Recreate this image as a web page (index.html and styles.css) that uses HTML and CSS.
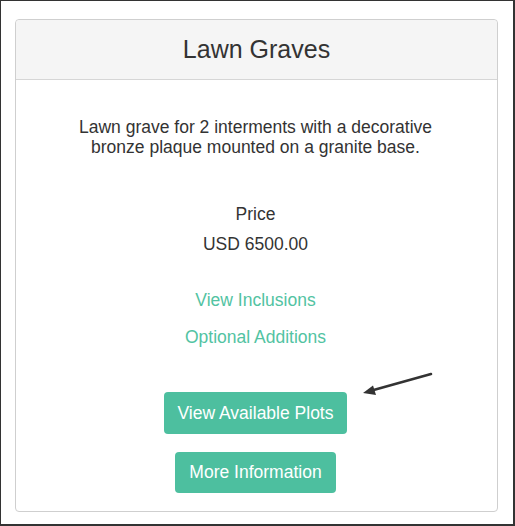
FILE: index.html
```html
<!DOCTYPE html>
<html lang="en">
<head>
    <meta charset="UTF-8">
    <meta name="viewport" content="width=device-width, initial-scale=1.0">
    <title>Lawn Graves</title>
    <link rel="stylesheet" href="styles.css">
</head>
<body>
    <div class="frame">
        <div class="card">
            <div class="card-heading">
                <h3 class="card-title">Lawn Graves</h3>
            </div>
            <div class="card-body">
                <p class="desc">Lawn grave for 2 interments with a decorative bronze plaque mounted on a granite base.</p>

                <div class="price">
                    <div>Price</div>
                    <div>USD 6500.00</div>
                </div>

                <div class="links">
                    <a href="#">View Inclusions</a>
                    <a href="#">Optional Additions</a>
                </div>

                <div class="actions">
                    <a class="btn" href="#">View Available Plots</a>
                    <a class="btn btn-small" href="#">More Information</a>
                </div>
            </div>
        </div>

        <!-- annotation arrow pointing at the button -->
        <svg class="arrow" width="80" height="36" viewBox="0 0 80 36">
            <line x1="75" y1="9" x2="14" y2="26" stroke="#333" stroke-width="2.6" stroke-linecap="round"/>
            <polygon points="7,28 17,20.5 20,30" fill="#333"/>
        </svg>
    </div>
</body>
</html>
```

FILE: styles.css
```css
html, body {
    margin: 0;
    padding: 0;
}
body {
    background: #fff;
    font-family: "Liberation Sans", Arial, sans-serif;
    font-size: 17.5px;
    color: #333;
}
.frame {
    position: relative;
    box-sizing: border-box;
    width: 515px;
    height: 526px;
    border-style: solid;
    border-color: #333;
    border-width: 1px 2px 2px 1px;
    padding: 18px 15px 0 14px;
}
.card {
    border: 1px solid #cfcfcf;
    border-radius: 4px;
    background: #fff;
    text-align: center;
}
.card-heading {
    height: 59px;
    background: #f5f5f5;
    border-bottom: 1px solid #d6d6d6;
    border-radius: 4px 4px 0 0;
}
.card-title {
    margin: 0;
    font-size: 25px;
    font-weight: normal;
    line-height: 59px;
    color: #333;
}
.card-body {
    padding: 0 40px 18px 38px;
}
.desc {
    margin: 37px 0 0 0;
    line-height: 20px;
}
.price {
    margin-top: 42px;
    line-height: 30px;
}
.links {
    margin-top: 23px;
    display: flex;
    flex-direction: column;
    align-items: center;
}
.links a {
    line-height: 37px;
    color: #52c3a2;
    text-decoration: none;
}
.actions {
    margin-top: 36px;
    display: flex;
    flex-direction: column;
    align-items: center;
    gap: 18px;
}
.btn {
    display: block;
    height: 42px;
    line-height: 42px;
    padding: 0 14px;
    background: #4dbf9f;
    color: #fff;
    border-radius: 4px;
    text-decoration: none;
}
.btn-small {
    height: 41px;
    line-height: 41px;
}
.arrow {
    position: absolute;
    left: 355px;
    top: 364px;
}
```
